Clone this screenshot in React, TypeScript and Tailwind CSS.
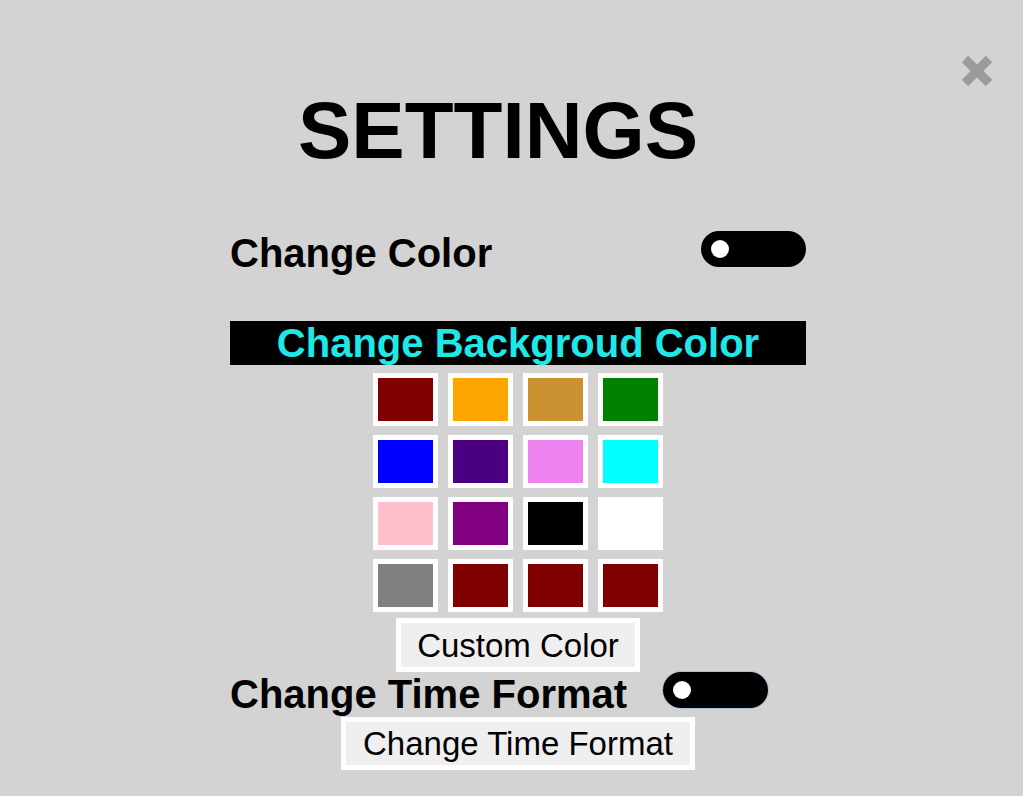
import React from "react";

const swatches = [
  "#800000", "#ffa500", "#c9912f", "#008000",
  "#0000ff", "#4b0082", "#ee82ee", "#00ffff",
  "#ffc0cb", "#800080", "#000000", "#ffffff",
  "#808080", "#800000", "#800000", "#800000",
];

const Toggle = ({ outlined = false }: { outlined?: boolean }) => (
  <div
    className={`relative h-9 w-[105px] rounded-full bg-black ${
      outlined ? "shadow-[0_0_0_1px_#a9c3d6]" : ""
    }`}
  >
    <span className="absolute left-[10px] top-[9px] h-[18px] w-[18px] rounded-full bg-white" />
  </div>
);

export default function App() {
  return (
    <div className="relative min-h-screen w-full bg-[#d3d3d3] font-['Liberation_Sans',Arial,sans-serif] text-black">
      {/* close button */}
      <button className="absolute right-[29px] top-[54px] h-[34px] w-[34px]">
        <svg viewBox="0 0 34 34" className="h-full w-full">
          <line x1="5" y1="5" x2="29" y2="29" stroke="#9b9b9b" strokeWidth="9" />
          <line x1="29" y1="5" x2="5" y2="29" stroke="#9b9b9b" strokeWidth="9" />
        </svg>
      </button>

      <div className="ml-[230px] flex w-[576px] flex-col pt-[91px]">
        <h1 className="ml-[68px] text-[80px] font-bold leading-none">SETTINGS</h1>

        <div className="mt-[60px] flex items-start justify-between">
          <h2 className="mt-[2px] text-[40px] font-bold leading-none">Change Color</h2>
          <Toggle />
        </div>

        <div className="mt-[48px] h-[44px] bg-black text-center text-[40px] font-bold leading-[44px] text-[#1ee8e8]">
          Change Backgroud Color
        </div>

        <div className="mx-auto mt-[8px] grid grid-cols-4 gap-x-[10px] gap-y-[9px]">
          {swatches.map((c, i) => (
            <button
              key={i}
              className="h-[53px] w-[65px] border-[5px] border-white"
              style={{ backgroundColor: c }}
            />
          ))}
        </div>

        <button className="mx-auto mt-[6px] h-[54px] border-[5px] border-white bg-[#efefef] px-[16px] text-[33px] leading-none">
          Custom Color
        </button>

        <div className="flex items-start gap-[36px]">
          <h2 className="mt-[2px] text-[40px] font-bold leading-none">Change Time Format</h2>
          <Toggle outlined />
        </div>

        <button className="mx-auto mt-[3px] h-[53px] border-[5px] border-white bg-[#efefef] px-[17px] text-[33px] leading-none">
          Change Time Format
        </button>
      </div>
    </div>
  );
}
